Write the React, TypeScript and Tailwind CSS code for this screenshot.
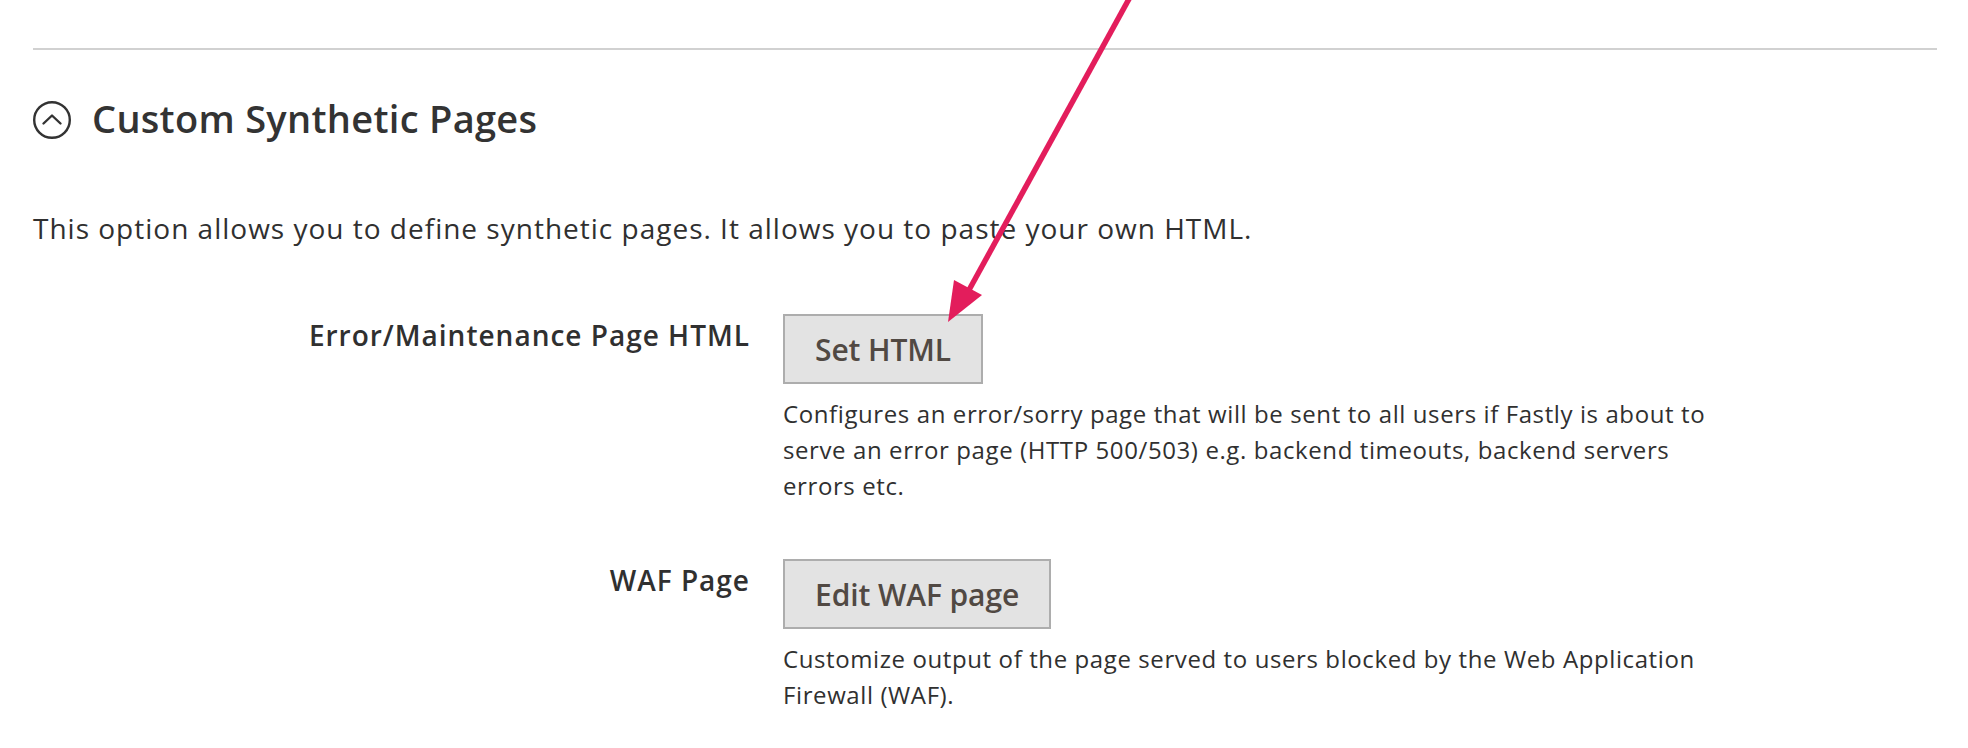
import React from 'react';

type Field = {
  label: string;
  button: string;
  note: string;
};

const FIELDS: Field[] = [
  {
    label: 'Error/Maintenance Page HTML',
    button: 'Set HTML',
    note: 'Configures an error/sorry page that will be sent to all users if Fastly is about to serve an error page (HTTP 500/503) e.g. backend timeouts, backend servers errors etc.',
  },
  {
    label: 'WAF Page',
    button: 'Edit WAF page',
    note: 'Customize output of the page served to users blocked by the Web Application Firewall (WAF).',
  },
];

function CollapseIcon() {
  return (
    <svg width="38" height="38" viewBox="0 0 38 38" fill="none" className="shrink-0">
      <circle cx="19" cy="19" r="17.8" stroke="#333333" strokeWidth="2.4" />
      <path d="M10.5 22.5 L19 14.5 L27.5 22.5" stroke="#333333" strokeWidth="2.4" strokeLinecap="round" strokeLinejoin="round" />
    </svg>
  );
}

// red annotation arrow drawn over the screenshot
function Arrow() {
  return (
    <svg
      className="pointer-events-none absolute left-0 top-0"
      width="1968"
      height="748"
      viewBox="0 0 1968 748"
    >
      <line x1="1135" y1="-12" x2="969" y2="290" stroke="#e31d5c" strokeWidth="5.5" />
      <polygon points="948,322 954,280 982,295" fill="#e31d5c" />
    </svg>
  );
}

export default function App() {
  return (
    <div className="relative h-[748px] w-full overflow-hidden bg-white font-['Open_Sans',sans-serif] text-[#303030]">
      <div className="pl-[33px] pr-[31px] pt-[48px]">
        <div className="h-[2px] bg-[#d1d1d1]" />

        <div className="mt-[49px] flex items-center gap-[21px]">
          <CollapseIcon />
          <h2 className="mb-[4px] text-[38px] font-semibold leading-[38px] tracking-[0.3px] text-[#333333]">
            Custom Synthetic Pages
          </h2>
        </div>

        <p className="mt-[66px] text-[28px] leading-[42px] tracking-[1px]">
          This option allows you to define synthetic pages. It allows you to paste your own HTML.
        </p>

        <div className="mt-[65px] flex flex-col gap-[55px]">
          {FIELDS.map((f) => (
            <div key={f.label} className="flex items-start gap-[33px]">
              <label className="w-[717px] shrink-0 text-right text-[28px] font-semibold leading-[42px] tracking-[1px]">
                {f.label}
              </label>
              <div className="flex flex-col items-start">
                <button className="flex h-[70px] items-center border-2 border-[#adadad] bg-[#e3e3e3] px-[30px] text-[30px] font-semibold tracking-[-0.1px] text-[#514943]">
                  {f.button}
                </button>
                <p className="mt-[12px] max-w-[950px] text-[24px] leading-[36px] tracking-[0.6px]">{f.note}</p>
              </div>
            </div>
          ))}
        </div>
      </div>

      <Arrow />
    </div>
  );
}
